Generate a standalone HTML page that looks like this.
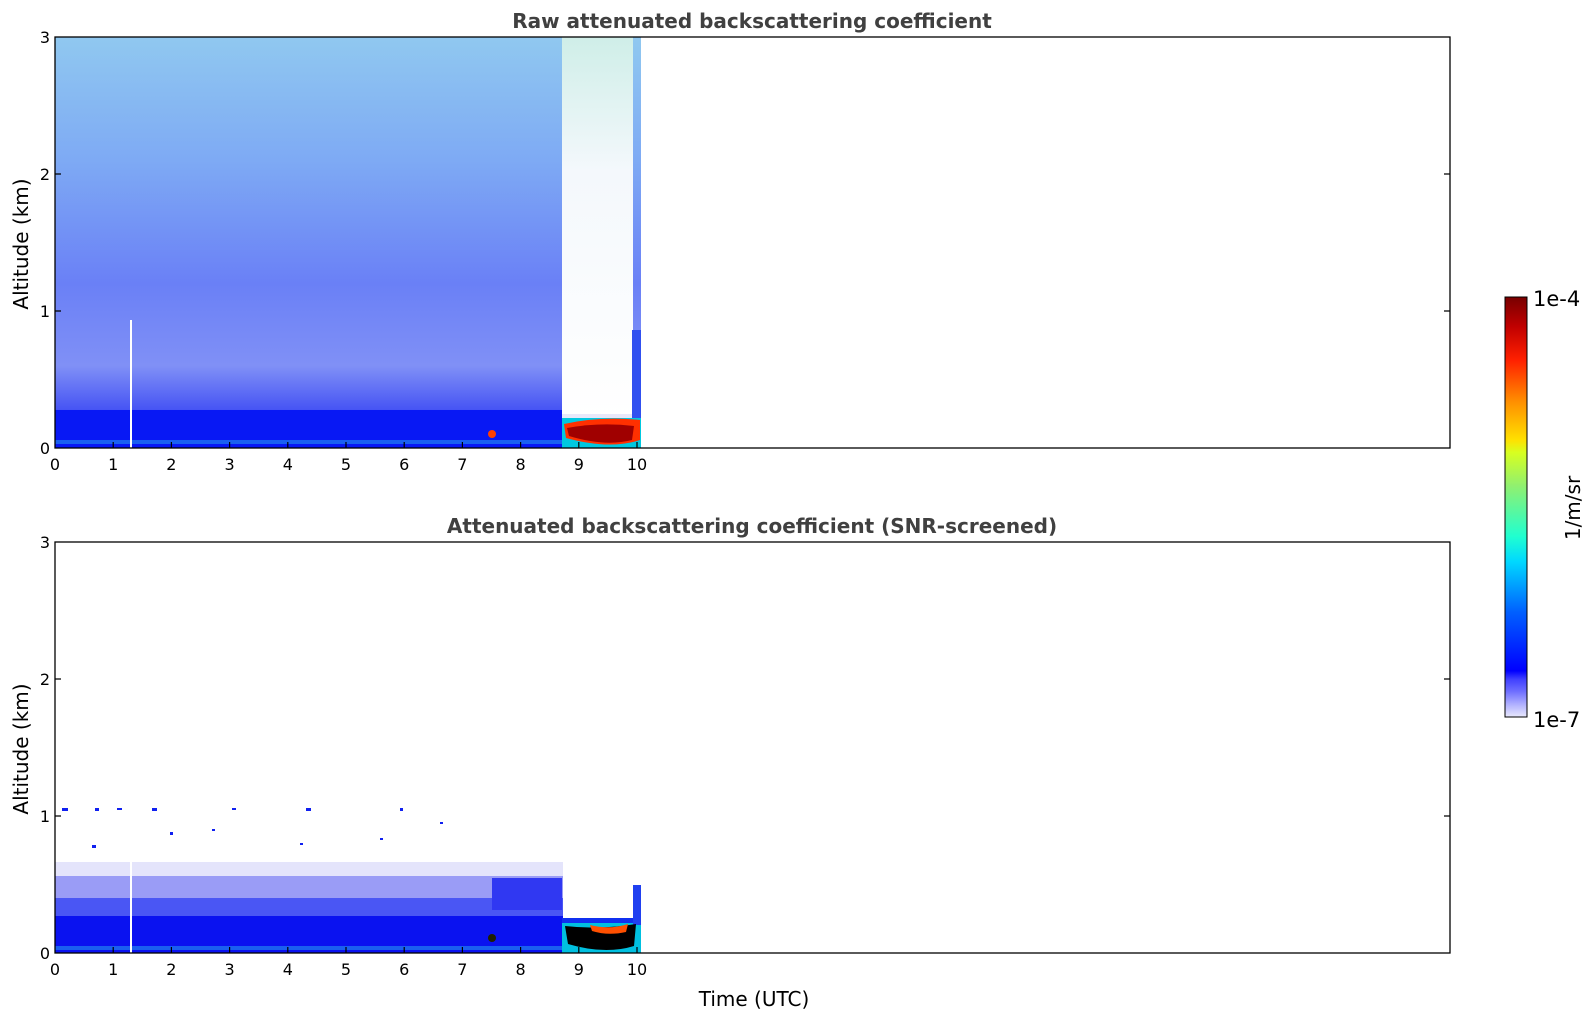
<!DOCTYPE html>
<html><head><meta charset="utf-8"><style>
html,body{margin:0;padding:0;background:#fff;}
svg{display:block;font-family:"DejaVu Sans","Liberation Sans",sans-serif;}
</style></head><body>
<svg width="1595" height="1020" viewBox="0 0 1595 1020" xmlns="http://www.w3.org/2000/svg">
<defs>
<linearGradient id="gTop" x1="0" y1="0" x2="0" y2="1">
<stop offset="0" stop-color="#90c8f0"/>
<stop offset="0.3" stop-color="#7eaaf4"/>
<stop offset="0.6" stop-color="#6a80f6"/>
<stop offset="0.8" stop-color="#8090f6"/>
<stop offset="0.9" stop-color="#4a58f4"/>
<stop offset="1" stop-color="#1020f2"/>
</linearGradient>
<linearGradient id="gGap" x1="0" y1="0" x2="0" y2="1">
<stop offset="0" stop-color="#cfeee8"/>
<stop offset="0.35" stop-color="#f4f8fc"/>
<stop offset="1" stop-color="#ffffff"/>
</linearGradient>
<linearGradient id="gCb" x1="0" y1="1" x2="0" y2="0">
<stop offset="0" stop-color="#e8e8fc"/>
<stop offset="0.03" stop-color="#b0b0ff"/>
<stop offset="0.06" stop-color="#7070ff"/>
<stop offset="0.09" stop-color="#4040ff"/>
<stop offset="0.11" stop-color="#0000ff"/>
<stop offset="0.25" stop-color="#0060ff"/>
<stop offset="0.37" stop-color="#00d8ff"/>
<stop offset="0.43" stop-color="#20ffd0"/>
<stop offset="0.55" stop-color="#90f070"/>
<stop offset="0.63" stop-color="#d8ff20"/>
<stop offset="0.66" stop-color="#ffe000"/>
<stop offset="0.75" stop-color="#ff9000"/>
<stop offset="0.85" stop-color="#ff2000"/>
<stop offset="0.93" stop-color="#c00000"/>
<stop offset="1" stop-color="#780000"/>
</linearGradient>
</defs>

<text x="752" y="28" text-anchor="middle" font-size="20" font-weight="bold" fill="#404040">Raw attenuated backscattering coefficient</text>
<text x="752" y="533" text-anchor="middle" font-size="20" font-weight="bold" fill="#404040">Attenuated backscattering coefficient (SNR-screened)</text>

<rect x="55" y="37" width="586" height="411" fill="url(#gTop)"/>
<rect x="55" y="410" width="586" height="38" fill="#0818f4"/>
<rect x="55" y="440" width="586" height="4" fill="#1a60f0"/>
<rect x="130" y="320" width="2" height="128" fill="#fff"/>
<rect x="562" y="37" width="71" height="383" fill="url(#gGap)"/>
<rect x="562" y="414" width="71" height="6" fill="#e8e8fa"/>
<rect x="632" y="330" width="9" height="90" fill="#3050f0"/>
<rect x="562" y="418" width="79" height="30" fill="#00c8e0"/>
<path d="M564 424 Q600 416 640 420 L640 440 Q610 450 566 438 Z" fill="#ff3000"/>
<path d="M567 428 Q600 422 634 426 L632 440 Q605 447 569 436 Z" fill="#a00000"/>
<circle cx="492" cy="434" r="4" fill="#ff4000"/>

<rect x="55" y="862" width="508" height="16" fill="#e4e4fb"/>
<rect x="55" y="876" width="508" height="24" fill="#9a9cf6"/>
<rect x="55" y="898" width="508" height="20" fill="#4a56f4"/>
<rect x="55" y="916" width="508" height="37" fill="#0a12f0"/>
<rect x="55" y="946" width="508" height="4" fill="#1a60f0"/>
<rect x="492" y="878" width="70" height="32" fill="#3038f2"/>
<rect x="130" y="860" width="2" height="93" fill="#fff"/>
<rect x="562" y="918" width="79" height="35" fill="#00c0e0"/>
<rect x="562" y="918" width="79" height="5" fill="#1030f0"/>
<rect x="633" y="885" width="8" height="40" fill="#2040f0"/>
<path d="M565 926 Q600 930 636 924 L634 946 Q605 955 568 944 Z" fill="#000"/>
<path d="M590 925 Q610 930 628 924 L626 932 Q608 936 592 931 Z" fill="#ff5000"/>
<circle cx="492" cy="938" r="4" fill="#202000"/>
<g fill="#1020f0">
<rect x="62" y="808" width="6" height="3"/><rect x="95" y="808" width="4" height="3"/><rect x="117" y="808" width="5" height="2"/><rect x="152" y="808" width="5" height="3"/><rect x="232" y="808" width="4" height="2"/><rect x="306" y="808" width="5" height="3"/><rect x="400" y="808" width="3" height="3"/>
<rect x="92" y="845" width="4" height="3"/><rect x="170" y="832" width="3" height="3"/><rect x="212" y="829" width="3" height="2"/><rect x="300" y="843" width="3" height="2"/><rect x="380" y="838" width="3" height="2"/><rect x="440" y="822" width="3" height="2"/>
</g>

<g fill="none" stroke="#000" stroke-width="1.3">
<rect x="55" y="37" width="1395" height="411"/>
<rect x="55" y="542" width="1395" height="411"/>
</g>
<g stroke="#000" stroke-width="1.2">
<path d="M55 311h6M55 174h6M1450 311h-6M1450 174h-6M55 816h6M55 679h6M1450 816h-6M1450 679h-6"/>
<path d="M113.2 448v-6M171.4 448v-6M229.6 448v-6M287.8 448v-6M346 448v-6M404.2 448v-6M462.4 448v-6M520.6 448v-6M578.8 448v-6M637 448v-6"/>
<path d="M113.2 953v-6M171.4 953v-6M229.6 953v-6M287.8 953v-6M346 953v-6M404.2 953v-6M462.4 953v-6M520.6 953v-6M578.8 953v-6M637 953v-6"/>
</g>
<g font-size="16" fill="#000" text-anchor="end">
<text x="50" y="454">0</text><text x="50" y="317">1</text><text x="50" y="180">2</text><text x="50" y="43">3</text>
<text x="50" y="959">0</text><text x="50" y="822">1</text><text x="50" y="685">2</text><text x="50" y="548">3</text>
</g>
<g font-size="16" fill="#000" text-anchor="middle">
<text x="55" y="470">0</text><text x="113.2" y="470">1</text><text x="171.4" y="470">2</text><text x="229.6" y="470">3</text><text x="287.8" y="470">4</text><text x="346" y="470">5</text><text x="404.2" y="470">6</text><text x="462.4" y="470">7</text><text x="520.6" y="470">8</text><text x="578.8" y="470">9</text><text x="637" y="470">10</text>
<text x="55" y="975">0</text><text x="113.2" y="975">1</text><text x="171.4" y="975">2</text><text x="229.6" y="975">3</text><text x="287.8" y="975">4</text><text x="346" y="975">5</text><text x="404.2" y="975">6</text><text x="462.4" y="975">7</text><text x="520.6" y="975">8</text><text x="578.8" y="975">9</text><text x="637" y="975">10</text>
</g>
<text transform="translate(28 244) rotate(-90)" text-anchor="middle" font-size="20" fill="#000">Altitude (km)</text>
<text transform="translate(28 749) rotate(-90)" text-anchor="middle" font-size="20" fill="#000">Altitude (km)</text>
<text x="754" y="1006" text-anchor="middle" font-size="20" fill="#000">Time (UTC)</text>

<rect x="1505" y="297" width="22" height="420" fill="url(#gCb)" stroke="#000" stroke-width="1"/>
<text x="1533" y="306" font-size="21" fill="#000">1e-4</text>
<text x="1533" y="727" font-size="21" fill="#000">1e-7</text>
<text transform="translate(1580 508) rotate(-90)" text-anchor="middle" font-size="20" fill="#000">1/m/sr</text>
</svg>
</body></html>
